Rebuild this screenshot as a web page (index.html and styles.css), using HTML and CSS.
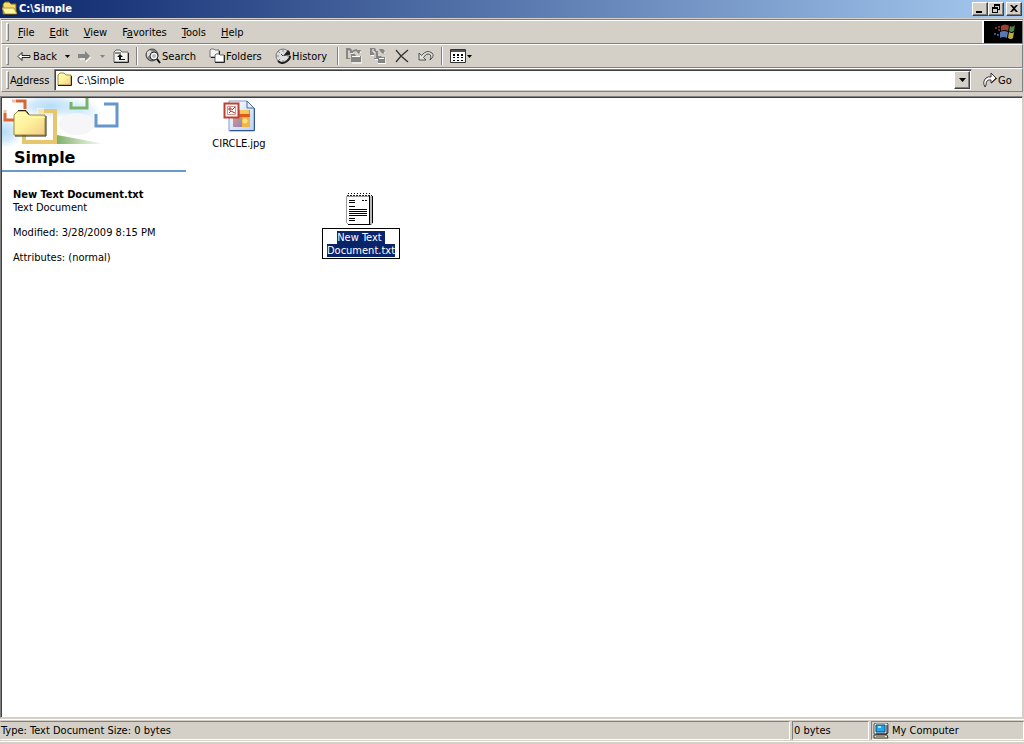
FILE: index.html
```html
<!DOCTYPE html>
<html lang="en">
<head>
<meta charset="utf-8">
<title>C:\Simple</title>
<link rel="stylesheet" href="styles.css">
</head>
<body>
<svg class="defs" aria-hidden="true">
  <defs>
    <linearGradient id="paper" x1="0" y1="0" x2="1" y2="1"><stop offset="0" stop-color="#ffffb8"/><stop offset=".5" stop-color="#fdf09a"/><stop offset="1" stop-color="#f3c98a"/></linearGradient>
    <linearGradient id="grass" x1="0" y1="0" x2="1" y2="0"><stop offset="0" stop-color="#7fb069"/><stop offset=".5" stop-color="#c3dcb6"/><stop offset="1" stop-color="#fff"/></linearGradient>
    <linearGradient id="page" x1="0" y1="0" x2="1" y2="1"><stop offset="0" stop-color="#fff"/><stop offset="1" stop-color="#b9d2f5"/></linearGradient>
    <linearGradient id="scene" x1="0" y1="0" x2="1" y2="1"><stop offset="0" stop-color="#f2a04a"/><stop offset=".6" stop-color="#a98bb0"/><stop offset="1" stop-color="#6a78c0"/></linearGradient>
    <radialGradient id="cloud"><stop offset="0" stop-color="#b4dcf8"/><stop offset=".5" stop-color="#c6e4fa" stop-opacity=".8"/><stop offset="1" stop-color="#d8eefc" stop-opacity="0"/></radialGradient>
  </defs>
</svg>
<div class="window">
  <header class="titlebar">
    <svg class="icon16" viewBox="0 0 16 16"><path d="M1 3l2-2h4l2 2h5v10H1z" fill="#f5dc68" stroke="#776520"/><path d="M0 7h12l3 6H3z" fill="#fff6a4" stroke="#b99431"/><path d="M3 14h13V6" fill="none" stroke="#1b1a14"/></svg>
    <h1 class="title">C:\Simple</h1>
    <div class="controls">
      <button class="ctl" aria-label="Minimize"><svg viewBox="0 0 12 10"><path d="M2 7h6v2H2z"/></svg></button>
      <button class="ctl" aria-label="Restore"><svg viewBox="0 0 12 10"><path d="M4 0h6v6H8V5h1V2H5v1H4zM2 3h6v6H2zM3 5v3h4V5z" fill-rule="evenodd"/></svg></button>
      <button class="ctl close" aria-label="Close"><svg viewBox="0 0 12 10"><path d="M2 1h2l2 2 2-2h2L7 4.500l3 3.500H8L6 6 4 8H2l3-3.500z"/></svg></button>
    </div>
  </header>
  <nav class="bar menubar">
    <span class="grip"></span>
    <button class="menu"><u>F</u>ile</button><button class="menu"><u>E</u>dit</button><button class="menu"><u>V</u>iew</button><button class="menu">F<u>a</u>vorites</button><button class="menu"><u>T</u>ools</button><button class="menu"><u>H</u>elp</button>
    <div class="brand"><svg viewBox="0 0 38 22"><g opacity=".85"><path d="M17 5q4-3 8 0l-1 5q-4-2-7 0z" fill="#bd4a38"/><path d="M26 5q3 2 5-1l-1 6q-3 2-5 0z" fill="#56a055"/><path d="M16 11q4-2 8 0l-1 6q-4-2-7 0z" fill="#668fd4"/><path d="M25 11q3 2 5 0l-1 6q-2 2-5 0z" fill="#e0cc45"/><path d="M11 6h2v2h-2zM14 5h2v2h-2zM14 8h2v2h-2z" fill="#863c32"/><path d="M10 12h2v2h-2zM13 13h2v2h-2z" fill="#46669e"/></g></svg></div>
  </nav>
  <div class="bar toolbar">
    <span class="grip"></span>
    <button class="tool back"><svg class="icon16" viewBox="0 0 16 16"><path d="M2 8.500l4-4v3h8v2H6v3z" fill="#fff" stroke="#222"/></svg>Back</button>
    <button class="drop" aria-label="Back history"><svg viewBox="0 0 5 3"><path d="M0 0h5L2.500 3z"/></svg></button>
    <button class="tool forward" aria-label="Forward"><svg class="icon16" viewBox="0 0 16 16"><path d="M3 11h6v3l5-5" fill="none" stroke="#fff"/><path d="M1 6h7V3l5 5-5 5v-3H1z" fill="#858585"/></svg></button>
    <button class="drop" aria-label="Forward history"><svg class="off" viewBox="0 0 5 3"><path d="M0 0h5L2.500 3z"/></svg></button>
    <button class="tool up" aria-label="Up"><svg class="icon16" viewBox="0 0 16 16"><path d="M1 14V4l2-2h4l2 2h6v10z" fill="#f4f3ee" stroke="#666"/><path d="M1 14.500h14.500V5M2 5h6" fill="none" stroke="#222"/><path d="M7 6l3 3H8v2h4v1H6V9H4z" fill="#111"/></svg></button>
    <span class="sep"></span>
    <button class="tool search"><svg class="icon16" viewBox="0 0 16 16"><circle cx="7" cy="7" r="6" fill="#888" stroke="#444"/><path d="M2 4l3-2 2 2-3 4-2 1z" fill="#ddd"/><circle cx="9" cy="8" r="4" fill="#d8dedf" stroke="#333"/><circle cx="9" cy="8" r="2.500" fill="#b8bcbc" stroke="#fff"/><path d="M12 11l3 4" stroke="#111" stroke-width="2"/></svg>Search</button>
    <button class="tool folders"><svg class="icon16" viewBox="0 0 16 16"><path d="M1 9V2l1-1h3l1 1h4v7z" fill="#f4f4f4" stroke="#777"/><path d="M6 14V7l1-1h3l1 1h4v7z" fill="#fff" stroke="#666"/><path d="M2 9.500h4M6 14.500h9.500V7M10.500 3v3" fill="none" stroke="#222"/></svg>Folders</button>
    <button class="tool history"><svg class="icon16" viewBox="0 0 16 16"><circle cx="8" cy="8" r="7" fill="#dedede" stroke="#777"/><path d="M8 1v3M8 12v3M1 8h3M12 8h3M3 3l2 2M3 13l2-2" stroke="#888"/><path d="M8 8l5-6 2 2v3z" fill="#222"/><path d="M8 8L6 6" stroke="#444"/><path d="M3 13q4 4 9 0 3-2 3-5" fill="none" stroke="#222" stroke-width="2"/></svg>History</button>
    <span class="sep"></span>
    <button class="tool glyph" aria-label="Move To"><svg class="icon16" viewBox="0 0 16 16"><path d="M1 10V1h3l2 2v3M11 3q3-2 4 2M6 15h10V8" fill="none" stroke="#fff"/><path d="M0 0h4l3 3v2H4V3L2 2v8h2v1H0zM5 6h4l1 2h5v6H5zM7 2l4-1v1h4l-2 4-3-3-3 1z" fill="#858585"/><path d="M6 8.500h8" stroke="#fff"/></svg></button>
    <button class="tool glyph" aria-label="Copy To"><svg class="icon16" viewBox="0 0 16 16"><path d="M1 7.500h3M5 11.500h3M8 15.500h8V9M11 2q3-1 4 3" fill="none" stroke="#fff"/><path d="M0 0h5l1 2v1h2v8H4V7H0zM8 8h3l1 1h3v6H8zM9 1h4l2 2-2 3-3-3z" fill="#858585"/><path d="M3 1v3h2v6M9 10.500h5" fill="none" stroke="#fff"/></svg></button>
    <button class="tool glyph" aria-label="Delete"><svg class="icon16" viewBox="0 0 16 16"><path d="M2 2l5 6 7 6M14 2L7 8l-5 6" fill="none" stroke="#333" stroke-width="1.300"/></svg></button>
    <button class="tool glyph" aria-label="Undo"><svg class="icon16" viewBox="0 0 16 16"><path d="M1 5v7h7L5.500 9.500Q8 5 11 6q3 1 1 6 5-4 2-7Q9 1 3.500 7.500z" fill="#e4e2dc" stroke="#444" stroke-width=".9"/></svg></button>
    <span class="sep"></span>
    <button class="tool views" aria-label="Views"><svg class="icon16" viewBox="0 0 16 16"><path d="M.5 1.500h15v13H.5z" fill="#fff" stroke="#333"/><path d="M1 3h14" stroke="#555" stroke-width="2"/><path d="M3 6h2v2H3zM7 6h2v2H7zM11 6h2v2h-2zM3 9h2v1H3zM7 9h2v1H7zM11 9h2v1h-2zM3 12h2v1H3zM7 12h2v1H7zM11 12h2v1h-2z"/></svg><svg class="tri" viewBox="0 0 5 3"><path d="M0 0h5L2.500 3z"/></svg></button>
  </div>
  <form class="bar addressbar">
    <span class="grip"></span>
    <label class="address-label" for="address">A<u>d</u>dress</label>
    <div class="address-field">
      <svg class="icon16" viewBox="0 0 16 16"><path d="M1 13V3l2-2h4l2 2h5v10z" fill="url(#paper)" stroke="#a68c34"/><path d="M1 13.500h13.500V4" fill="none" stroke="#211d10"/></svg>
      <input id="address" type="text" value="C:\Simple">
      <button type="button" class="combo" aria-label="Show addresses"><svg viewBox="0 0 7 4"><path d="M0 0h7L3.500 4z"/></svg></button>
    </div>
    <button type="button" class="go"><svg class="icon16" viewBox="0 0 16 16"><path d="M3 15Q0 10 4 6q3-2 5-1V1l5 5-5 5V8Q4 7 4 13z" fill="#fff" stroke="#333"/><path d="M9.500 11L15 6" stroke="#222"/></svg>Go</button>
  </form>
  <main class="content">
    <aside class="info">
      <svg class="banner" viewBox="0 0 128 48">
        <ellipse cx="48" cy="8" rx="36" ry="13" fill="url(#cloud)"/><ellipse cx="2" cy="34" rx="20" ry="17" fill="url(#cloud)"/><ellipse cx="78" cy="14" rx="22" ry="14" fill="url(#cloud)" opacity=".6"/>
        <ellipse cx="75" cy="26" rx="18" ry="11" fill="#f6f6f8"/>
        <path d="M55 37q22 4 48 9H55z" fill="url(#grass)"/>
        <path d="M10 3h13v8M3 12v10h9" fill="none" stroke="#d56834" stroke-width="3"/><path d="M8 1h6v4H8zM1 11h4v4H1z" fill="#fff" opacity=".6"/>
        <path d="M69 4v6h16V0" fill="none" stroke="#78b36d" stroke-width="3"/>
        <path d="M102 6h13v22H94V16" fill="none" stroke="#6796cb" stroke-width="3"/>
        <path d="M36 13h17v31H22V36" fill="none" stroke="#e6c76e" stroke-width="4"/><path d="M35 10h7v5h-7z" fill="#fff" opacity=".5"/>
        <path d="M12 37V17l4-4h7l4 4h16v20z" fill="url(#paper)" stroke="#9b8740"/><path d="M13 17.500h14l2 2h14" stroke="#fffbd5" fill="none"/><path d="M13 38h31V18M16 12.500h8l3 4" fill="none" stroke="#29220e"/>
      </svg>
      <h2 class="folder-name">Simple</h2>
      <div class="details">
        <strong>New Text Document.txt</strong>
        <p>Text Document</p>
        <p class="fact">Modified: 3/28/2009 8:15 PM</p>
        <p class="fact">Attributes: (normal)</p>
      </div>
    </aside>
    <section class="files">
      <figure class="file circle">
        <svg class="icon32" viewBox="0 0 32 32"><path d="M6 1h18l7 7v23H6z" fill="url(#page)" stroke="#7d9dce"/><path d="M7 30.500h24.500V8" fill="none" stroke="#31548e"/><path d="M24 1v7h7z" fill="#e2eefc" stroke="#486c9e"/><path d="M10 10h17v17H10z" fill="url(#scene)"/><path d="M17 10h9v4h-9z" fill="#f8c860"/><path d="M16 14h11v3H16z" fill="#dd5a1c"/><path d="M19 17h8v10h-8z" fill="#f2b544"/><circle cx="22" cy="21" r="2.500" fill="#ffe37a"/><path d="M1.500 3.500h14v14h-14z" fill="#fff5ef" stroke="#b8433d" stroke-width="2"/><path d="M4.500 6.500h8v8h-8z" fill="#fff" stroke="#d3958b"/><path d="M6 8h2v2H6zM9 10l3-3M6 13l2-2 2 1 2 1" fill="none" stroke="#b52d29"/></svg>
        <figcaption>CIRCLE.jpg</figcaption>
      </figure>
      <figure class="file text">
        <svg class="icon32" viewBox="0 0 32 32"><path d="M1.500 3.500h23v28h-21l-2-2z" fill="#fff" stroke="#999"/><path d="M24.500 3v28M27.500 3v27l-2 1.500H3" fill="none" stroke="#000"/><path d="M26 3v28" stroke="#bbb" stroke-width="2"/><path d="M3 .5h24" stroke="#000" stroke-dasharray="1 2"/><path d="M2 2.500h25" stroke="#222" stroke-dasharray="2 1"/><path d="M4 7.500h6M4 9.500h6M17 7.500h2M20 7.500h2M4 13.500h6M4 16.500h18M4 18.500h18M4 20.500h18M4 22.500h18M4 25.500h6M4 27.500h6" stroke="#000"/></svg>
        <figcaption class="selected"><span>New Text </span><br><span>Document.txt</span></figcaption>
      </figure>
    </section>
  </main>
  <footer class="status">
    <div class="cell message">Type: Text Document Size: 0 bytes</div>
    <div class="cell size">0 bytes</div>
    <div class="cell place"><svg class="icon16" viewBox="0 0 16 16"><path d="M1 1l2-1h11l1 1v9l-2 1H1z" fill="#eee" stroke="#555"/><path d="M3 2h9v7H3z" fill="#22a6ed" stroke="#064980"/><path d="M5 3h3v2H5z" fill="#9ee7ff"/><path d="M14 2v9H3" fill="none" stroke="#111"/><path d="M1 12h13l1 3H1z" fill="#f4e8d0" stroke="#333"/><path d="M3 13.500h9" stroke="#998f76"/></svg>My Computer</div>
  </footer>
</div>
</body>
</html>
```
FILE: styles.css
```css
* { box-sizing: border-box; }
body { margin: 0; background: #d4d0c8; color: #000; font: 11px/13px "DejaVu Sans Condensed", "Noto Sans", sans-serif; }
button, input { font: inherit; color: inherit; }
button { border: 0; padding: 0; background: transparent; white-space: nowrap; }
h1, h2, p, figure { margin: 0; }
svg { display: block; flex: none; }
.defs { position: absolute; width: 0; height: 0; }
.icon16 { width: 16px; height: 16px; }
.icon32 { width: 32px; height: 32px; }
.window { display: flex; flex-direction: column; height: 100vh; }

.titlebar { display: flex; align-items: center; height: 18px; padding: 0 2px; gap: 1px; background: linear-gradient(90deg, #0c266c, #a6caf0); }
.title { flex: 1; color: #fff; font-size: 11px; line-height: 16px; }
.controls { display: flex; }
.ctl { display: grid; place-items: center; width: 16px; height: 14px; background: #d4d0c8; border: 1px solid; border-color: #fff #404040 #404040 #fff; box-shadow: inset -1px -1px #808080; }
.ctl svg { width: 12px; height: 10px; }
.close { margin-left: 2px; }

.bar { display: flex; align-items: center; height: 24px; margin: 0 1px; padding-left: 4px; border: 1px solid; border-color: #fff #808080 #808080 #fff; }
.menubar { height: 24px; margin-top: 2px; box-shadow: 0 -1px #808080; }
.grip { width: 3px; height: 18px; margin-right: 7px; border: 1px solid; border-color: #fff #808080 #808080 #fff; }
.menu { height: 20px; margin-right: 1px; padding: 0 7px; }
.menubar .grip { margin-right: 2px; }
.brand { align-self: stretch; width: 40px; margin-left: auto; border-left: 2px solid #fff; background: #000; }
.brand svg { width: 38px; height: 22px; }
.tool { display: flex; align-items: center; height: 22px; gap: 1px; }
.drop { width: 19px; height: 20px; display: grid; place-items: center; }
.drop svg, .tri { width: 5px; height: 3px; }
.off { fill: #858585; }
.back { width: 42px; }
.up { margin-left: 1px; }
.sep { width: 2px; height: 18px; margin: 0 7px; border-left: 1px solid #808080; border-right: 1px solid #fff; }
.search { width: 64px; }
.folders { width: 66px; }
.history { width: 55px; }
.glyph + .glyph { margin-left: 8px; }

.address-label { width: 44px; }
.addressbar .grip { margin-right: 1px; }
.addressbar { padding-right: 4px; }
.address-field { display: flex; align-items: center; flex: 1; height: 22px; padding: 1px 1px 1px 2px; background: #fff; border: 1px solid; border-color: #808080 #d4d0c8 #d4d0c8 #808080; box-shadow: inset 1px 1px #404040; }
.address-field input { flex: 1; min-width: 0; height: 17px; border: 0; padding: 0 4px; outline: 0; background: transparent; }
.combo { display: grid; place-items: center; width: 16px; height: 18px; background: #d4d0c8; border: 1px solid; border-color: #fff #404040 #404040 #fff; box-shadow: inset -1px -1px #808080; }
.combo svg { width: 7px; height: 4px; }
.go { display: flex; align-items: center; width: 46px; padding-left: 10px; }

.content { display: flex; flex: 1; min-height: 0; margin: 4px 1px 1px 0; background: #fff; border: 1px solid; border-color: #808080 #d4d0c8 #d4d0c8 #808080; box-shadow: inset 1px 1px #404040; }
.info { width: 185px; padding: 1px 0 0 1px; }
.banner { width: 128px; height: 48px; }
.folder-name { padding: 2px 0 2px 12px; border-bottom: 2px solid #6699cc; font: bold 16px/20px "DejaVu Sans", "Noto Sans", sans-serif; }
.details { padding: 16px 0 0 11px; }
.details strong { display: block; }
.fact { margin-top: 12px; }
.files { display: grid; grid-template-columns: 106px 138px; grid-template-rows: 92px 92px; }
.file { display: flex; flex-direction: column; align-items: center; padding-top: 3px; text-align: center; }
.circle figcaption { margin-top: 5px; }
.text { grid-column: 2; grid-row: 2; padding-top: 4px; }
.selected { width: 78px; margin-top: 3px; padding: 2px 0 1px; border: 1px solid #000; white-space: pre-wrap; }
.selected span { display: inline-block; background: #0a246a; color: #fff; }

.status { display: flex; gap: 2px; height: 24px; margin-bottom: 1px; padding: 1px 0 3px; border-top: 1px solid #fff; box-shadow: inset 0 -1px #d4d0c8, inset 0 -2px #fff; }
.cell { display: flex; align-items: center; border: 1px solid; border-color: #808080 #fff #fff #808080; }
.message { flex: 1; border-left-color: #d4d0c8; }
.size { width: 77px; padding-left: 1px; }
.place { width: 153px; padding-left: 1px; gap: 3px; }
```
